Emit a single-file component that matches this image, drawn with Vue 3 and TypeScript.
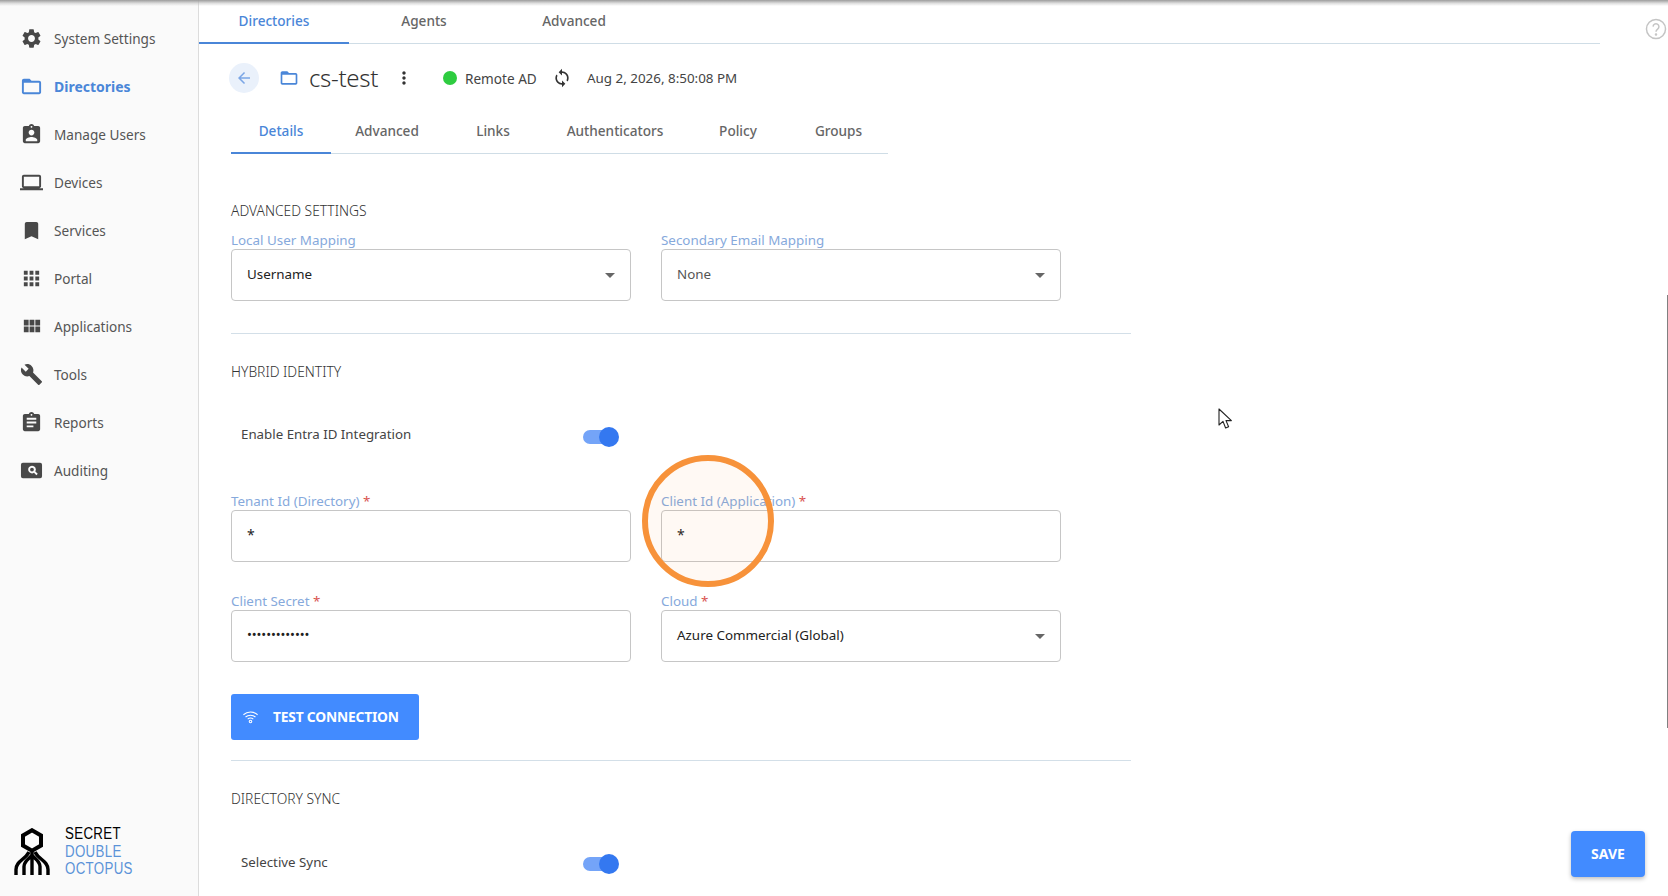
<script setup lang="ts">
interface NavItem { label: string; icon: string; active?: boolean }
const icons: Record<string, string> = {
  gear: 'M19.14 12.94c.04-.3.06-.61.06-.94 0-.32-.02-.64-.07-.94l2.03-1.58a.49.49 0 0 0 .12-.61l-1.92-3.32a.488.488 0 0 0-.59-.22l-2.39.96c-.5-.38-1.03-.7-1.62-.94l-.36-2.54a.484.484 0 0 0-.48-.41h-3.84c-.24 0-.43.17-.47.41l-.36 2.54c-.59.24-1.13.57-1.62.94l-2.39-.96c-.22-.08-.47 0-.59.22L2.74 8.87c-.12.21-.08.47.12.61l2.03 1.58c-.05.3-.09.63-.09.94s.02.64.07.94l-2.03 1.58a.49.49 0 0 0-.12.61l1.92 3.32c.12.22.37.29.59.22l2.39-.96c.5.38 1.03.7 1.62.94l.36 2.54c.05.24.24.41.48.41h3.84c.24 0 .44-.17.47-.41l.36-2.54c.59-.24 1.13-.56 1.62-.94l2.39.96c.22.08.47 0 .59-.22l1.92-3.32c.12-.22.07-.47-.12-.61l-2.01-1.58zM12 15.6c-1.98 0-3.6-1.62-3.6-3.6s1.62-3.6 3.6-3.6 3.6 1.62 3.6 3.6-1.62 3.6-3.6 3.6z',
  folder: 'M20 6h-8l-2-2H4c-1.1 0-1.99.9-1.99 2L2 18c0 1.1.9 2 2 2h16c1.1 0 2-.9 2-2V8c0-1.1-.9-2-2-2zm0 12H4V8h16v10z',
  badge: 'M19 3h-4.18C14.4 1.84 13.3 1 12 1s-2.4.84-2.82 2H5c-1.1 0-2 .9-2 2v14c0 1.1.9 2 2 2h14c1.1 0 2-.9 2-2V5c0-1.1-.9-2-2-2zm-7 0c.55 0 1 .45 1 1s-.45 1-1 1-1-.45-1-1 .45-1 1-1zm0 4c1.66 0 3 1.34 3 3s-1.34 3-3 3-3-1.34-3-3 1.34-3 3-3zm6 12H6v-1.4c0-2 4-3.1 6-3.1s6 1.1 6 3.1V19z',
  laptop: 'M20 18c1.1 0 1.99-.9 1.99-2L22 6c0-1.1-.9-2-2-2H4c-1.1 0-2 .9-2 2v10c0 1.1.9 2 2 2H0v2h24v-2h-4zM4 6h16v10H4V6z',
  bookmark: 'M17 3H7c-1.1 0-1.99.9-1.99 2L5 21l7-3 7 3V5c0-1.1-.9-2-2-2z',
  apps: 'M4 8h4V4H4v4zm6 12h4v-4h-4v4zm-6 0h4v-4H4v4zm0-6h4v-4H4v4zm6 0h4v-4h-4v4zm6-10v4h4V4h-4zm-6 4h4V4h-4v4zm6 6h4v-4h-4v4zm0 6h4v-4h-4v4z',
  module: 'M4 11h5V5H4v6zm0 7h5v-6H4v6zm6 0h5v-6h-5v6zm6 0h5v-6h-5v6zm-6-7h5V5h-5v6zm6-6v6h5V5h-5z',
  wrench: 'M22.7 19l-9.1-9.1c.9-2.3.4-5-1.5-6.9-2-2-5-2.4-7.4-1.3L9 6 6 9 1.6 4.7C.4 7.1.9 10.1 2.9 12.1c1.9 1.9 4.6 2.4 6.9 1.5l9.1 9.1c.4.4 1 .4 1.4 0l2.3-2.3c.5-.4.5-1.1.1-1.4z',
  report: 'M19 3h-4.18C14.4 1.84 13.3 1 12 1s-2.4.84-2.82 2H5c-1.1 0-2 .9-2 2v14c0 1.1.9 2 2 2h14c1.1 0 2-.9 2-2V5c0-1.1-.9-2-2-2zm-7 0c.55 0 1 .45 1 1s-.45 1-1 1-1-.45-1-1 .45-1 1-1zm2 14H7v-2h7v2zm3-4H7v-2h10v2zm0-4H7V7h10v2z',
  audit: 'M3 4h18a2 2 0 0 1 2 2v12a2 2 0 0 1-2 2H3a2 2 0 0 1-2-2V6a2 2 0 0 1 2-2zm9.5 3a4 4 0 1 0 2.1 7.4l2.5 2.5 1.4-1.4-2.5-2.5A4 4 0 0 0 12.5 7zm0 2a2 2 0 1 1 0 4 2 2 0 0 1 0-4z'
};
const nav: NavItem[] = [
  { label: 'System Settings', icon: 'gear' },
  { label: 'Directories', icon: 'folder', active: true },
  { label: 'Manage Users', icon: 'badge' },
  { label: 'Devices', icon: 'laptop' },
  { label: 'Services', icon: 'bookmark' },
  { label: 'Portal', icon: 'apps' },
  { label: 'Applications', icon: 'module' },
  { label: 'Tools', icon: 'wrench' },
  { label: 'Reports', icon: 'report' },
  { label: 'Auditing', icon: 'audit' }
];
const topTabs = ['Directories', 'Agents', 'Advanced'];
const subTabs = [
  { label: 'Details', w: 100 },
  { label: 'Advanced', w: 112 },
  { label: 'Links', w: 100 },
  { label: 'Authenticators', w: 144 },
  { label: 'Policy', w: 102 },
  { label: 'Groups', w: 99 }
];
</script>

<template>
  <div class="page">
    <aside class="side">
      <nav class="nav">
        <a v-for="n in nav" :key="n.label" class="nav-item" :class="{ active: n.active }">
          <svg class="nav-icon" viewBox="0 0 24 24"><path :d="icons[n.icon]" /></svg>
          <span>{{ n.label }}</span>
        </a>
      </nav>
      <div class="logo">
        <svg class="logo-mark" viewBox="0 0 36 47" fill="none" stroke="#000" stroke-width="3.4">
          <path d="M18 2.2 27 7.4V17.6L18 22.8 9 17.6V7.4Z" stroke-width="4" />
          <path d="M18 24V47M10 47V38.5C10 33 15 31 18 27C21 31 26 33 26 38.5V47" />
          <path d="M2 47V41.5C2 33 11 32 15 24M34 47V41.5C34 33 25 32 21 24" />
        </svg>
        <div class="logo-text">
          <div class="l-black">SECRET</div>
          <div>DOUBLE</div>
          <div>OCTOPUS</div>
        </div>
      </div>
    </aside>

    <main class="main">
      <div class="tabs top-tabs">
        <div v-for="(t, i) in topTabs" :key="t" class="tab top-tab" :class="{ on: i === 0 }">{{ t }}</div>
      </div>

      <div class="head">
        <button class="back" type="button">
          <svg viewBox="0 0 24 24" width="18" height="18"><path d="M20 11H7.83l5.59-5.59L12 4l-8 8 8 8 1.41-1.41L7.83 13H20z" /></svg>
        </button>
        <svg class="head-folder" viewBox="0 0 24 24" width="20" height="20"><path :d="icons.folder" /></svg>
        <span class="title">cs-test</span>
        <svg class="kebab" viewBox="0 0 24 24" width="20" height="20"><path d="M12 8c1.1 0 2-.9 2-2s-.9-2-2-2-2 .9-2 2 .9 2 2 2zm0 2c-1.1 0-2 .9-2 2s.9 2 2 2 2-.9 2-2-.9-2-2-2zm0 6c-1.1 0-2 .9-2 2s.9 2 2 2 2-.9 2-2-.9-2-2-2z" /></svg>
        <span class="dot"></span>
        <span class="remote">Remote AD</span>
        <svg class="sync" viewBox="0 0 24 24" width="20" height="20"><path d="M12 4V1L8 5l4 4V6c3.31 0 6 2.69 6 6 0 1.01-.25 1.97-.7 2.8l1.46 1.46C19.54 15.03 20 13.57 20 12c0-4.42-3.58-8-8-8zm0 14c-3.31 0-6-2.69-6-6 0-1.01.25-1.97.7-2.8L5.24 7.74C4.46 8.97 4 10.43 4 12c0 4.42 3.58 8 8 8v3l4-4-4-4v3z" /></svg>
        <span class="stamp">Aug 2, 2026, 8:50:08 PM</span>
      </div>

      <div class="tabs sub-tabs">
        <div v-for="(t, i) in subTabs" :key="t.label" class="tab sub-tab" :class="{ on: i === 0 }" :style="{ width: t.w + 'px' }">{{ t.label }}</div>
      </div>

      <section class="form">
        <h3 class="h-adv">ADVANCED SETTINGS</h3>
        <div class="grid g-adv">
          <div class="field">
            <label>Local User Mapping</label>
            <div class="box"><span>Username</span><i class="caret"></i></div>
          </div>
          <div class="field">
            <label>Secondary Email Mapping</label>
            <div class="box dim"><span>None</span><i class="caret"></i></div>
          </div>
        </div>
        <hr class="rule r1" />
        <h3 class="h-hyb">HYBRID IDENTITY</h3>
        <div class="toggle-row t-entra">
          <span class="t-label">Enable Entra ID Integration</span>
          <span class="switch"><i></i></span>
        </div>
        <div class="grid g-ids">
          <div class="field">
            <label>Tenant Id (Directory) <b>*</b></label>
            <div class="box"><span class="ast">*</span></div>
          </div>
          <div class="field">
            <label>Client Id (Application) <b>*</b></label>
            <div class="box"><span class="ast">*</span></div>
            <div class="ring"></div>
          </div>
          <div class="field">
            <label>Client Secret <b>*</b></label>
            <div class="box"><span class="dots">•••••••••••••</span></div>
          </div>
          <div class="field">
            <label>Cloud <b>*</b></label>
            <div class="box"><span>Azure Commercial (Global)</span><i class="caret"></i></div>
          </div>
        </div>
        <button class="test" type="button">
          <svg viewBox="0 0 24 24" width="17" height="17" fill="none" stroke="#fff" stroke-width="1.5">
            <path d="M2 9.5c5.6-5 14.4-5 20 0M5 12.7c3.9-3.4 10.1-3.4 14 0M8 15.8c2.3-1.9 5.7-1.9 8 0" />
            <circle cx="12" cy="19" r="1.8" />
          </svg>
          <span>TEST CONNECTION</span>
        </button>
        <hr class="rule r2" />
        <h3 class="h-dir">DIRECTORY SYNC</h3>
        <div class="toggle-row t-sel">
          <span class="t-label">Selective Sync</span>
          <span class="switch"><i></i></span>
        </div>
      </section>

      <svg class="help" viewBox="0 0 24 24" width="22" height="22" fill="none" stroke="#c4c4c4" stroke-width="1.6">
        <circle cx="12" cy="12" r="10.4" />
        <path d="M8.8 9.4a3.2 3.2 0 1 1 5 2.7c-1.2.8-1.8 1.5-1.8 3" />
        <circle cx="12" cy="18" r=".6" fill="#c4c4c4" />
      </svg>
      <button class="save" type="button">SAVE</button>
      <svg class="cursor" viewBox="0 0 14 22" width="14" height="22">
        <path d="M1 1v16l4-3.6L7.6 20l3-1.3L8 12.6h5.4Z" fill="#fff" stroke="#222" stroke-width="1.1" stroke-linejoin="round" />
      </svg>
      <div class="scroll"></div>
    </main>
    <div class="top-shadow"></div>
  </div>
</template>

<style>
html, body { margin: 0; padding: 0; background: #fff; overflow: hidden; }
</style>

<style scoped>
.page {
  position: relative;
  display: flex;
  width: 1668px;
  height: 896px;
  overflow: hidden;
  font-family: "Noto Sans", "Open Sans", "Liberation Sans", sans-serif;
  color: #3a3a3a;
  background: #fff;
}
.top-shadow {
  position: absolute;
  top: 0; left: 0; right: 0;
  height: 6px;
  background: linear-gradient(#9c9c9c, rgba(190, 190, 190, .5) 55%, rgba(255, 255, 255, 0));
}
.side {
  box-sizing: border-box;
  flex: 0 0 199px;
  height: 896px;
  display: flex;
  flex-direction: column;
  justify-content: space-between;
  background: #fafafa;
  border-right: 1px solid #dcdcdc;
}
.nav { padding-top: 14px; display: flex; flex-direction: column; }
.nav-item {
  height: 48px;
  display: flex;
  align-items: center;
  padding-left: 20px;
  gap: 11px;
  font-size: 13.6px;
  color: #555;
}
.nav-item.active { color: #4a86d8; font-weight: 700; font-size: 14px; }
.nav-icon { width: 23px; height: 23px; fill: #484848; flex: none; }
.active .nav-icon { fill: #4a86d8; }
.logo {
  display: flex;
  align-items: center;
  gap: 15px;
  padding: 0 0 20px 14px;
}
.logo-mark { width: 36px; height: 47px; flex: none; }
.logo-text {
  font-family: "Liberation Sans", sans-serif;
  font-size: 16px;
  line-height: 16.5px;
  color: #5b93d8;
  transform: scale(.83, 1.06);
  transform-origin: left center;
  letter-spacing: .4px;
}
.l-black { color: #000; }

.main { position: relative; flex: 1; min-width: 0; }
.tabs { display: flex; box-sizing: border-box; border-bottom: 1px solid #cfdde6; }
.tab {
  display: flex; align-items: center; justify-content: center;
  font-size: 13.6px; font-weight: 500; color: #666; box-sizing: border-box;
  border-bottom: 2px solid transparent; margin-bottom: -1px;
}
.tab.on { color: #4a86d8; border-bottom-color: #4a86d8; }
.top-tabs { width: 1401px; height: 44px; }
.top-tab { width: 150px; padding-bottom: 2px; }
.head { height: 70px; display: flex; align-items: center; padding: 0 0 2px 30px; box-sizing: border-box; }
.back {
  width: 30px; height: 30px; border: 0; padding: 0; border-radius: 50%;
  background: #eaf1fb; display: flex; align-items: center; justify-content: center;
  fill: #7ba6e6;
}
.head-folder { fill: #4a86d8; margin-left: 20px; }
.title { margin: -2px 0 0 10px; font-size: 24px; font-weight: 300; color: #333; width: 70px; white-space: nowrap; letter-spacing: -.3px; }
.kebab { fill: #333; margin-left: 15px; }
.dot { width: 14px; height: 14px; border-radius: 50%; background: #2ecc40; margin-left: 29px; }
.remote { margin-left: 8px; font-size: 13.6px; color: #444; width: 72px; white-space: nowrap; }
.sync { fill: #333; margin-left: 15px; }
.stamp { margin-left: 15px; font-size: 13.4px; color: #444; }
.sub-tabs { margin-left: 32px; width: 657px; height: 40px; }
.sub-tab { padding-bottom: 5px; }

.form { width: 900px; margin-left: 32px; }
h3 { margin: 0; font-size: 13.8px; font-weight: 300; line-height: 20px; color: #333; }
.h-adv { padding-top: 47px; }
.grid { display: grid; grid-template-columns: 400px 400px; column-gap: 30px; }
.g-adv { margin-top: 11px; }
.g-ids { margin-top: 46px; row-gap: 31px; }
.field { position: relative; }
label { display: block; height: 17px; line-height: 16px; font-size: 13.4px; color: #86a9dc; white-space: nowrap; }
label b { color: #d9534f; font-weight: 400; }
.box {
  box-sizing: border-box;
  height: 52px;
  border: 1px solid #c6c6c6;
  border-radius: 4px;
  display: flex;
  align-items: center;
  justify-content: space-between;
  padding: 0 15px 2px;
  font-size: 13.4px;
  color: #222;
  background: #fff;
}
.dim { color: #555; }
.caret { width: 0; height: 0; border-left: 5px solid transparent; border-right: 5px solid transparent; border-top: 5px solid #666; margin-top: 2px; }
.ast { font-size: 14px; margin-top: -2px; }
.dots { font-size: 13px; letter-spacing: -.1px; margin-top: -2px; }
.rule { margin: 0; border: 0; border-top: 1px solid #d3dfe8; }
.r1 { margin-top: 32px; }
.h-hyb { margin-top: 28px; }
.toggle-row { display: flex; align-items: center; justify-content: space-between; width: 378px; padding-left: 10px; font-size: 13.3px; color: #444; height: 24px; }
.t-label { margin-top: -2px; }
.t-sel .t-label { margin-top: 0; }
.t-entra { margin-top: 41px; }
.t-sel { margin-top: 41px; }
.switch { position: relative; width: 36px; height: 20px; margin-top: 3px; }
.switch::before { content: ""; position: absolute; left: 0; right: 2px; top: 3px; height: 14px; border-radius: 7px; background: #74a4f8; }
.switch i { position: absolute; right: 0; top: 0; width: 20px; height: 20px; border-radius: 50%; background: #3478f0; }
.ring {
  position: absolute;
  left: -19px;
  top: -38px;
  box-sizing: border-box;
  width: 132px;
  height: 132px;
  border-radius: 50%;
  border: 6px solid #f7923a;
  background: rgba(247, 146, 58, .055);
  pointer-events: none;
}
.test {
  margin-top: 32px;
  width: 188px;
  height: 46px;
  display: flex;
  align-items: center;
  gap: 14px;
  padding: 0 0 2px 11px;
  border: 0;
  border-radius: 3px;
  background: #428bff;
  color: #fff;
  font: 700 13.8px "Noto Sans", sans-serif;
  letter-spacing: -.2px;
}
.r2 { margin-top: 20px; }
.h-dir { margin-top: 28px; }

.help { position: absolute; left: 1446px; top: 18px; }
.save {
  position: absolute;
  left: 1372px;
  top: 831px;
  width: 74px;
  height: 46px;
  border: 0;
  padding: 0 0 2px;
  border-radius: 4px;
  background: #428bff;
  color: #fff;
  font: 700 14px "Noto Sans", sans-serif;
  box-shadow: 0 2px 4px rgba(0, 0, 0, .25);
}
.cursor { position: absolute; left: 1019px; top: 408px; }
.scroll { position: absolute; right: 0; top: 295px; width: 1px; height: 433px; background: #808080; }
</style>
